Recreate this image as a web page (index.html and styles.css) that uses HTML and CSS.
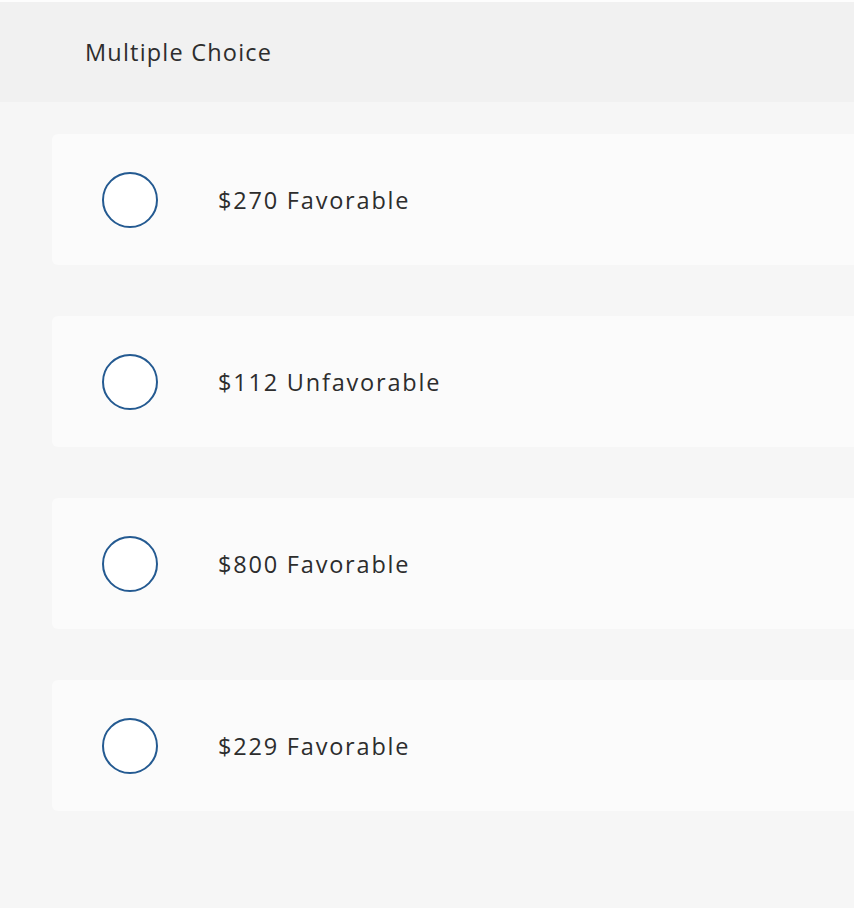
FILE: index.html
```html
<!DOCTYPE html>
<html>
<head>
<meta charset="utf-8">
<link rel="stylesheet" href="styles.css">
</head>
<body>
<div class="page">
  <div class="header"><span class="title">Multiple Choice</span></div>
  <div class="options">
    <div class="option"><span class="radio"></span><span class="label">$270 Favorable</span></div>
    <div class="option"><span class="radio"></span><span class="label">$112 Unfavorable</span></div>
    <div class="option"><span class="radio"></span><span class="label">$800 Favorable</span></div>
    <div class="option"><span class="radio"></span><span class="label">$229 Favorable</span></div>
  </div>
</div>
</body>
</html>
```

FILE: styles.css
```css
html, body {
  margin: 0;
  padding: 0;
  background: #fdfdfd;
}
.page {
  margin-top: 2px;
  min-height: 906px;
  background: #f6f6f6;
  font-family: "Open Sans", "Lato", sans-serif;
  color: #2d2d2d;
}
.header {
  height: 100px;
  background: #f1f1f1;
  display: flex;
  align-items: center;
  padding-left: 85px;
  box-sizing: border-box;
}
.title {
  font-size: 23.5px;
  letter-spacing: 1.2px;
}
.options {
  padding: 32px 0 0 52px;
  display: flex;
  flex-direction: column;
  gap: 51px;
}
.option {
  height: 131px;
  background: #fbfbfb;
  border-radius: 6px 0 0 6px;
  display: flex;
  align-items: center;
  padding-left: 50px;
}
.radio {
  width: 52px;
  height: 52px;
  border: 2px solid #245a91;
  border-radius: 50%;
  background: #fff;
  flex: none;
}
.label {
  margin-left: 60px;
  font-size: 23.5px;
  letter-spacing: 1.8px;
}
```
